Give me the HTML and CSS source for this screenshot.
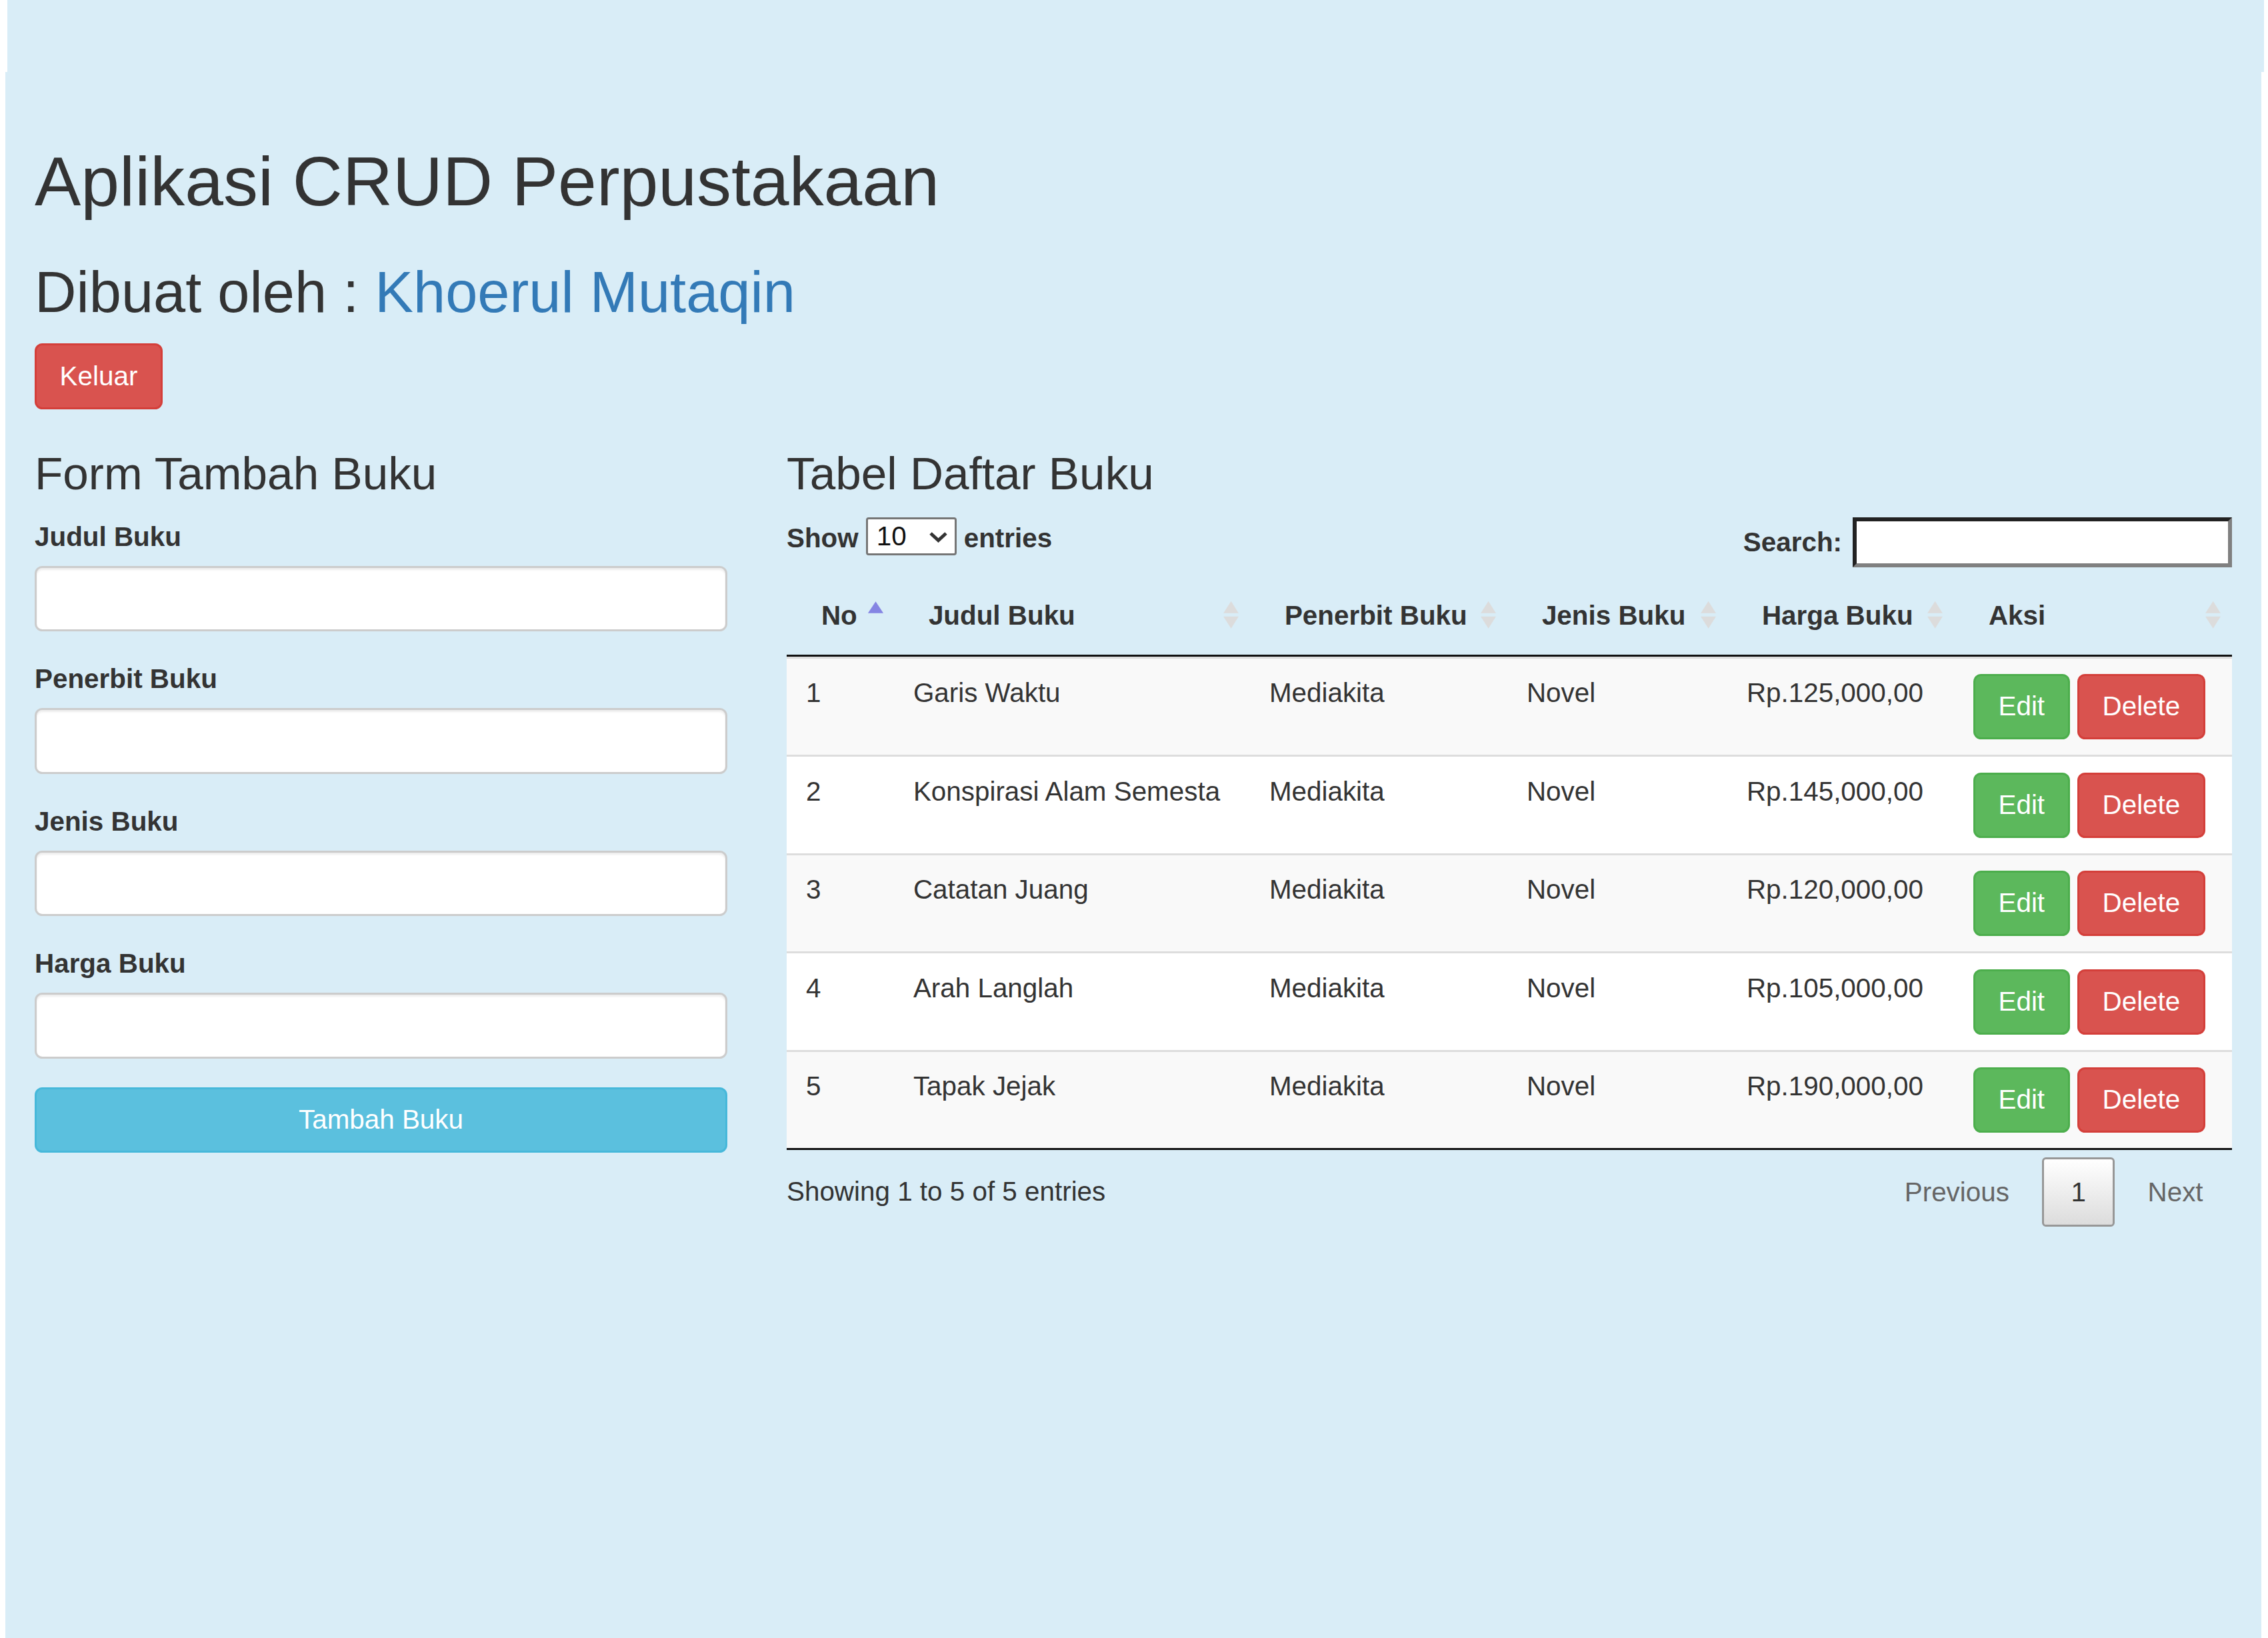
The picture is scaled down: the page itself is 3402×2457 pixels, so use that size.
FILE: index.html
```html
<!DOCTYPE html>
<html lang="id">
<head>
<meta charset="utf-8">
<title>Aplikasi CRUD Perpustakaan</title>
<link rel="stylesheet" href="styles.css">
</head>
<body>
<div class="topband"></div>
<main class="page">
  <h1 class="title">Aplikasi CRUD Perpustakaan</h1>
  <h2 class="subtitle">Dibuat oleh : <a href="#" class="author">Khoerul Mutaqin</a></h2>
  <div class="actions"><a class="btn btn-danger" href="#">Keluar</a></div>

  <div class="row">
    <section class="col-form">
      <h3 class="section-title">Form Tambah Buku</h3>
      <form class="book-form">
        <div class="form-group">
          <label class="form-label">Judul Buku</label>
          <input class="form-control" type="text">
        </div>
        <div class="form-group">
          <label class="form-label">Penerbit Buku</label>
          <input class="form-control" type="text">
        </div>
        <div class="form-group">
          <label class="form-label">Jenis Buku</label>
          <input class="form-control" type="text">
        </div>
        <div class="form-group">
          <label class="form-label">Harga Buku</label>
          <input class="form-control" type="text">
        </div>
        <button type="button" class="btn btn-info btn-block">Tambah Buku</button>
      </form>
    </section>

    <section class="col-table">
      <h3 class="section-title">Tabel Daftar Buku</h3>
      <div class="dt-top">
        <div class="dt-length">
          <span class="lbl">Show</span>
          <span class="select-wrap">
            <select class="dt-select"><option>10</option><option>25</option><option>50</option><option>100</option></select>
            <svg class="chev" viewBox="0 0 29 17"><path d="M3 3 L14.5 13.5 L26 3" fill="none" stroke="#333" stroke-width="5"/></svg>
          </span>
          <span class="lbl">entries</span>
        </div>
        <label class="dt-filter">Search:<input type="search" class="dt-search"></label>
      </div>

      <table class="dt-table">
        <colgroup>
          <col class="c1"><col class="c2"><col class="c3"><col class="c4"><col class="c5"><col class="c6">
        </colgroup>
        <thead>
          <tr>
            <th>No<svg class="sort" viewBox="0 0 19 19"><path d="M5.5 8 L9.5 2 L13.5 8 Z" fill="#8585e3"/></svg></th>
            <th>Judul Buku<svg class="sort" viewBox="0 0 19 19"><path d="M5.2 8 L9.2 1.8 L13.1 8 Z M5.2 9.8 L13.1 9.8 L9.2 16 Z" fill="#dcdcdc"/></svg></th>
            <th>Penerbit Buku<svg class="sort" viewBox="0 0 19 19"><path d="M5.2 8 L9.2 1.8 L13.1 8 Z M5.2 9.8 L13.1 9.8 L9.2 16 Z" fill="#dcdcdc"/></svg></th>
            <th>Jenis Buku<svg class="sort" viewBox="0 0 19 19"><path d="M5.2 8 L9.2 1.8 L13.1 8 Z M5.2 9.8 L13.1 9.8 L9.2 16 Z" fill="#dcdcdc"/></svg></th>
            <th>Harga Buku<svg class="sort" viewBox="0 0 19 19"><path d="M5.2 8 L9.2 1.8 L13.1 8 Z M5.2 9.8 L13.1 9.8 L9.2 16 Z" fill="#dcdcdc"/></svg></th>
            <th>Aksi<svg class="sort" viewBox="0 0 19 19"><path d="M5.2 8 L9.2 1.8 L13.1 8 Z M5.2 9.8 L13.1 9.8 L9.2 16 Z" fill="#dcdcdc"/></svg></th>
          </tr>
        </thead>
        <tbody>
          <tr>
            <td>1</td><td>Garis Waktu</td><td>Mediakita</td><td>Novel</td><td>Rp.125,000,00</td>
            <td><button type="button" class="btn btn-success">Edit</button> <button type="button" class="btn btn-danger">Delete</button></td>
          </tr>
          <tr>
            <td>2</td><td>Konspirasi Alam Semesta</td><td>Mediakita</td><td>Novel</td><td>Rp.145,000,00</td>
            <td><button type="button" class="btn btn-success">Edit</button> <button type="button" class="btn btn-danger">Delete</button></td>
          </tr>
          <tr>
            <td>3</td><td>Catatan Juang</td><td>Mediakita</td><td>Novel</td><td>Rp.120,000,00</td>
            <td><button type="button" class="btn btn-success">Edit</button> <button type="button" class="btn btn-danger">Delete</button></td>
          </tr>
          <tr>
            <td>4</td><td>Arah Langlah</td><td>Mediakita</td><td>Novel</td><td>Rp.105,000,00</td>
            <td><button type="button" class="btn btn-success">Edit</button> <button type="button" class="btn btn-danger">Delete</button></td>
          </tr>
          <tr>
            <td>5</td><td>Tapak Jejak</td><td>Mediakita</td><td>Novel</td><td>Rp.190,000,00</td>
            <td><button type="button" class="btn btn-success">Edit</button> <button type="button" class="btn btn-danger">Delete</button></td>
          </tr>
        </tbody>
      </table>

      <div class="dt-bottom">
        <div class="dt-info">Showing 1 to 5 of 5 entries</div>
        <div class="dt-paginate">
          <a class="pg disabled" href="#">Previous</a>
          <a class="pg current" href="#">1</a>
          <a class="pg disabled" href="#">Next</a>
        </div>
      </div>
    </section>
  </div>
</main>
</body>
</html>
```
FILE: styles.css
```css
* { box-sizing: border-box; }

html, body {
  margin: 0;
  padding: 0;
}

body {
  background: #ffffff;
  font-family: "Liberation Sans", Arial, Helvetica, sans-serif;
  font-size: 40.4px;
  line-height: 57.7px;
  color: #333333;
}

.topband {
  height: 108px;
  margin: 0 6px 0 11px;
  background: #d9edf7;
}

.page {
  display: block;
  margin: 0 10px 0 8px;
  min-height: 2349px;
  background: #d9edf7;
  padding: 106.8px 44px 60px;
}

.title {
  margin: 0;
  font-size: 103.9px;
  line-height: 114.3px;
  font-weight: 400;
}

.subtitle {
  margin: 62.3px 0 28.9px;
  font-size: 86.6px;
  line-height: 95.2px;
  font-weight: 400;
}

.author {
  color: #337ab7;
  text-decoration: none;
}

.actions { display: flex; }

.btn {
  display: inline-block;
  padding: 17.3px 34.6px;
  font-family: inherit;
  font-size: 40.4px;
  line-height: 57.7px;
  font-weight: 400;
  border: 3px solid transparent;
  border-radius: 11.5px;
  color: #ffffff;
  text-decoration: none;
  text-align: center;
  white-space: nowrap;
  vertical-align: top;
  cursor: pointer;
  margin: 0;
}

.btn-danger { background: #d9534f; border-color: #d43f3a; }
.btn-success { background: #5cb85c; border-color: #4cae4c; }
.btn-info { background: #5bc0de; border-color: #46b8da; }
.btn-block { display: block; width: 100%; }

.row {
  display: grid;
  grid-template-columns: 1039px 1fr;
  column-gap: 89px;
  margin-top: 58px;
}

.section-title {
  margin: 0 0 28.9px;
  font-size: 69.3px;
  line-height: 76.2px;
  font-weight: 400;
}

/* form */
.form-group { margin-bottom: 43.3px; }

.form-label {
  display: block;
  font-weight: 700;
  margin-bottom: 14.4px;
}

.form-control {
  display: block;
  width: 100%;
  height: 98.1px;
  padding: 17.3px 34.6px;
  font: inherit;
  color: #555;
  background: #ffffff;
  border: 3px solid #cccccc;
  border-radius: 11.5px;
  box-shadow: inset 0 3px 3px rgba(0, 0, 0, 0.075);
}

/* datatable controls */
.dt-top {
  display: flex;
  justify-content: space-between;
  align-items: flex-start;
  height: 89.6px;
}

.dt-length {
  display: flex;
  align-items: flex-start;
  font-weight: 700;
}

.dt-length .lbl { margin-top: 2px; }

.select-wrap {
  position: relative;
  display: block;
  width: 136px;
  height: 57px;
  margin: -1px 11px 0;
}

.dt-select {
  appearance: none;
  -webkit-appearance: none;
  display: block;
  width: 100%;
  height: 100%;
  margin: 0;
  padding: 0 0 0 13px;
  font-family: inherit;
  font-size: 40.4px;
  font-weight: 400;
  color: #111111;
  background: #ffffff;
  border: 3px solid #767676;
  border-radius: 4px;
}

.chev {
  position: absolute;
  right: 13px;
  top: 21px;
  width: 29px;
  height: 17px;
  pointer-events: none;
}

.dt-filter {
  display: flex;
  align-items: center;
  font-weight: 700;
  margin-top: -1px;
}

.dt-search {
  margin: 0 0 0 16px;
  width: 569px;
  height: 75px;
  padding: 3px 6px;
  font: inherit;
  font-weight: 400;
  background: #ffffff;
  border-style: solid;
  border-width: 6px;
  border-color: #222222 #808080 #808080 #222222;
}

/* table */
.dt-table {
  width: 100%;
  table-layout: fixed;
  border-collapse: separate;
  border-spacing: 0;
  border-bottom: 3px solid #111111;
}

.c1 { width: 161px; }
.c2 { width: 534px; }
.c3 { width: 386px; }
.c4 { width: 330px; }
.c5 { width: 340px; }
.c6 { width: 417px; }

.dt-table th {
  position: relative;
  text-align: left;
  font-weight: 700;
  padding: 28.9px 51.9px;
  border-bottom: 3px solid #111111;
  white-space: nowrap;
}

.sort {
  position: absolute;
  right: 0;
  top: 50%;
  width: 55px;
  height: 55px;
  transform: translateY(-50%);
}

.dt-table td {
  padding: 23.1px 28.9px;
  border-top: 3px solid #dddddd;
  vertical-align: top;
  white-space: nowrap;
  overflow: visible;
}

.dt-table tbody tr:nth-child(odd) td { background: #f9f9f9; }
.dt-table tbody tr:nth-child(even) td { background: #ffffff; }

/* bottom */
.dt-bottom {
  display: flex;
  justify-content: space-between;
  align-items: flex-start;
}

.dt-info { padding-top: 34px; }

.dt-paginate {
  display: flex;
  padding-top: 11px;
}

.pg {
  display: block;
  padding: 20.2px 40.4px;
  margin-left: 5.8px;
  border: 3px solid transparent;
  border-radius: 5.8px;
  color: #666666;
  text-decoration: none;
}

.pg.current {
  color: #333333;
  border-color: #979797;
  background: linear-gradient(to bottom, #ffffff 0%, #dcdcdc 100%);
}
```
